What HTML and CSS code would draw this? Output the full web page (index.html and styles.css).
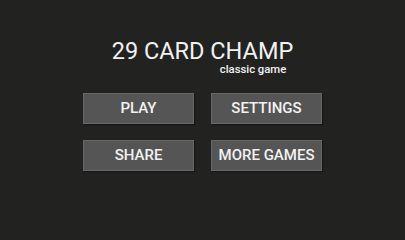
FILE: index.html
```html
<!DOCTYPE html>
<html>
<head>
<meta charset="utf-8">
<link rel="stylesheet" href="styles.css">
</head>
<body>
<main class="screen">
  <header class="title-block">
    <h1 class="title">29 CARD CHAMP</h1>
    <div class="subtitle">classic game</div>
  </header>
  <nav class="menu">
    <button class="btn">PLAY</button>
    <button class="btn">SETTINGS</button>
    <button class="btn">SHARE</button>
    <button class="btn">MORE GAMES</button>
  </nav>
</main>
</body>
</html>
```
FILE: styles.css
```css
html, body {
  margin: 0;
  padding: 0;
  background: #222221;
}
.screen {
  width: 405px;
  height: 228px;
  display: flex;
  flex-direction: column;
  align-items: center;
  font-family: Roboto, "Liberation Sans", sans-serif;
  color: #f2f2f2;
}
.title-block {
  margin-top: 40px;
  display: flex;
  flex-direction: column;
}
.title {
  margin: 0;
  font-size: 23.5px;
  line-height: 23.5px;
  font-weight: 400;
}
.subtitle {
  align-self: flex-end;
  margin-right: 7px;
  font-size: 11.3px;
  line-height: 12px;
  font-weight: 500;
  margin-top: 0;
}
.menu {
  margin-top: 17px;
  display: grid;
  grid-template-columns: 111px 111px;
  column-gap: 17px;
  row-gap: 16px;
}
.btn {
  height: 31px;
  padding: 0;
  background: #555555;
  border: 1px solid #686868;
  box-shadow: 1px 1px 1px #161616;
  color: #f2f2f2;
  font-family: Roboto, "Liberation Sans", sans-serif;
  font-size: 15px;
  font-weight: 500;
  line-height: 29px;
  text-align: center;
}
```
